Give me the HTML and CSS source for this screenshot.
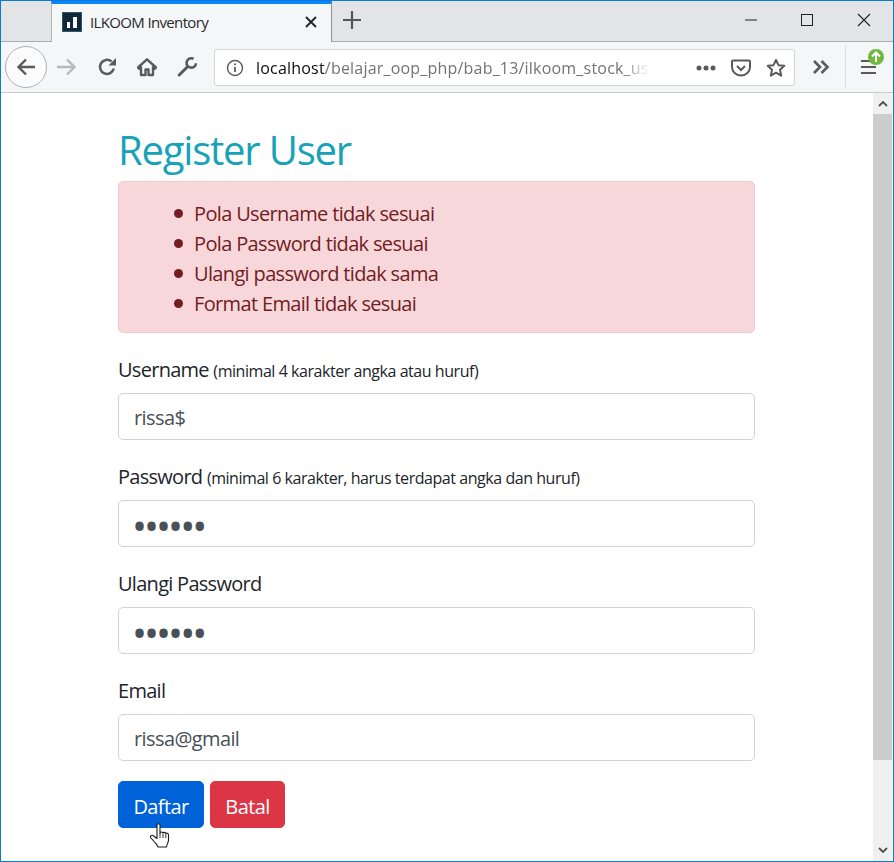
FILE: index.html
```html
<!DOCTYPE html>
<html lang="id">
<head>
<meta charset="utf-8">
<title>ILKOOM Inventory</title>
<link rel="stylesheet" href="styles.css">
</head>
<body>
<div class="window">
  <div class="tabbar">
    <div class="tab-spacer"></div>
    <div class="tab">
      <svg class="favicon" viewBox="0 0 20 20" width="20" height="20"><rect x="0.5" y="0.5" width="19" height="19" fill="#12263a" stroke="#2a5a6c"/><rect x="5" y="10" width="3" height="6" fill="#fff"/><rect x="11" y="5" width="4" height="11" fill="#fff"/></svg>
      <span class="tab-title">ILKOOM Inventory</span>
      <svg class="tab-close" viewBox="0 0 12 12" width="12" height="12"><path d="M1 1l10 10M11 1L1 11" stroke="#222" stroke-width="1.8" fill="none"/></svg>
    </div>
    <div class="newtab"><svg viewBox="0 0 18 18" width="18" height="18"><path d="M9 0v18M0 9h18" stroke="#555" stroke-width="2.200" fill="none"/></svg></div>
    <div class="winctl">
      <span class="winbtn"><svg viewBox="0 0 14 14" width="14" height="14"><path d="M1 7h12" stroke="#222" stroke-width="1" fill="none"/></svg></span>
      <span class="winbtn"><svg viewBox="0 0 14 14" width="14" height="14"><rect x="1.5" y="1.5" width="11" height="11" stroke="#222" fill="none"/></svg></span>
      <span class="winbtn"><svg viewBox="0 0 14 14" width="14" height="14"><path d="M1 1l12 12M13 1L1 13" stroke="#222" stroke-width="1.1" fill="none"/></svg></span>
    </div>
  </div>
  <div class="toolbar">
    <div class="tool back"><svg viewBox="0 0 20 20" width="20" height="20"><path d="M10 2.500L2.500 10l7.500 7.500M3 10h16" stroke="#5a5a5c" stroke-width="2.400" fill="none"/></svg></div>
    <div class="tool"><svg viewBox="0 0 20 20" width="20" height="20"><path d="M10 2.500L17.500 10 10 17.500M17 10H0" stroke="#b8b8b9" stroke-width="2.400" fill="none"/></svg></div>
    <div class="tool"><svg viewBox="0 0 20 20" width="20" height="20"><path d="M16.800 11.500A7 7 0 1 1 14.500 4.500" stroke="#5a5a5c" stroke-width="2.500" fill="none"/><path d="M19 1v7.500h-7.500z" fill="#5a5a5c"/></svg></div>
    <div class="tool"><svg viewBox="0 0 20 20" width="20" height="20"><path d="M10 2.300L1 10.500l1.300 1.300L4 10.300V18h4.500v-5.500h3V18H16v-7.700l1.700 1.500 1.300-1.300z" fill="none" stroke="#5a5a5c" stroke-width="2.400" stroke-linejoin="round"/></svg></div>
    <div class="tool"><svg viewBox="0 0 20 20" width="20" height="20"><path d="M2.200 18l8.300-8.300" stroke="#5a5a5c" stroke-width="3" stroke-linecap="round" fill="none"/><path d="M16.500 1.800A4.700 4.700 0 1 0 19 6.200" stroke="#5a5a5c" stroke-width="2.600" fill="none"/></svg></div>
    <div class="urlbar">
      <svg class="info" viewBox="0 0 18 18" width="18" height="18"><circle cx="9" cy="9" r="7.500" stroke="#5a5a5c" stroke-width="1.400" fill="none"/><path d="M9 8v5M9 4.500v1.800" stroke="#5a5a5c" stroke-width="1.800" fill="none"/></svg>
      <div class="url"><span class="host">localhost</span>/belajar_oop_php/bab_13/ilkoom_stock_use</div>
      <svg class="dots" viewBox="0 0 20 6" width="20" height="6"><circle cx="3" cy="3" r="2.500" fill="#5a5a5c"/><circle cx="10" cy="3" r="2.500" fill="#5a5a5c"/><circle cx="17" cy="3" r="2.500" fill="#5a5a5c"/></svg>
      <svg class="pocket" viewBox="0 0 20 18" width="20" height="18"><path d="M2 1.500h16a1 1 0 0 1 1 1V8a9 8.500 0 0 1-18 0V2.500a1 1 0 0 1 1-1z" stroke="#5a5a5c" stroke-width="2" fill="none"/><path d="M6 7l4 4 4-4" stroke="#5a5a5c" stroke-width="2" fill="none"/></svg>
      <svg class="star" viewBox="0 0 20 20" width="20" height="20"><path d="M10 1.800l2.500 5.400 5.800.6-4.300 4 1.200 5.900L10 14.700l-5.200 3 1.200-5.900-4.300-4 5.800-.6z" stroke="#5a5a5c" stroke-width="2" stroke-linejoin="round" fill="none"/></svg>
    </div>
    <div class="tool overflow"><svg viewBox="0 0 18 14" width="18" height="14"><path d="M2 1l6 6-6 6M9.500 1l6 6-6 6" stroke="#5a5a5c" stroke-width="2.600" fill="none"/></svg></div>
    <div class="sep"></div>
    <div class="tool menu">
      <svg viewBox="0 0 16 16" width="16" height="16"><path d="M0 2h9M0 8h15M0 14h15" stroke="#5a5a5c" stroke-width="2" fill="none"/></svg>
      <svg class="badge" viewBox="0 0 16 16" width="16" height="16"><circle cx="8" cy="8" r="8" fill="#6fb93c"/><path d="M8 13V4M4 7.500L8 3.500l4 4" stroke="#fff" stroke-width="2" fill="none"/></svg>
    </div>
  </div>
  <div class="viewport">
    <main class="page">
      <h1 class="title">Register User</h1>
      <div class="alert">
        <ul class="errors">
          <li>Pola Username tidak sesuai</li>
          <li>Pola Password tidak sesuai</li>
          <li>Ulangi password tidak sama</li>
          <li>Format Email tidak sesuai</li>
        </ul>
      </div>
      <form class="form">
        <div class="group">
          <label class="label" for="username">Username <small class="hint">(minimal 4 karakter angka atau huruf)</small></label>
          <input class="input" id="username" type="text" value="rissa$">
        </div>
        <div class="group">
          <label class="label" for="password">Password <small class="hint">(minimal 6 karakter, harus terdapat angka dan huruf)</small></label>
          <input class="input secret" id="password" type="password" value="rissa1">
        </div>
        <div class="group">
          <label class="label" for="ulangi">Ulangi Password</label>
          <input class="input secret" id="ulangi" type="password" value="rissa2">
        </div>
        <div class="group">
          <label class="label" for="email">Email</label>
          <input class="input" id="email" type="text" value="rissa@gmail">
        </div>
        <div class="actions">
          <button class="btn primary" type="button">Daftar</button>
          <button class="btn danger" type="button">Batal</button>
          <svg class="cursor" viewBox="0 0 20 25" width="20" height="25"><path d="M7 2c0-1.600 3-1.600 3 0v8c.6-1.400 2.600-1.200 3 0 .6-1 2.500-.8 2.800.5.800-.8 2.700-.4 2.700 1.500v5c0 3-1.800 4-2 7H8c-.5-2-1.800-3-3.500-5L1 15c-1.300-1.800.5-3.600 2.300-2.300L7 15.500z" fill="#fff" stroke="#1c1c1c" stroke-width="1.100" stroke-linejoin="round"/><path d="M10 10v5M13 10.500v4.500M15.800 11v4" stroke="#1c1c1c" stroke-width=".9"/></svg>
        </div>
      </form>
    </main>
    <div class="scrollbar">
      <svg class="arrow" viewBox="0 0 10 6" width="10" height="6"><path d="M1 5l4-4 4 4" stroke="#505050" stroke-width="1.800" fill="none"/></svg>
      <div class="thumb"></div>
      <svg class="arrow" viewBox="0 0 10 6" width="10" height="6"><path d="M1 1l4 4 4-4" stroke="#505050" stroke-width="1.800" fill="none"/></svg>
    </div>
  </div>
</div>
</body>
</html>
```
FILE: styles.css
```css
* { box-sizing: border-box; }
html, body { margin: 0; padding: 0; height: 100%; overflow: hidden; background: #fff; }
body { font-family: "Open Sans", "Noto Sans", sans-serif; color: #212529; }
.window { width: 894px; height: 862px; border: 1px solid #0f7ad2; display: flex; flex-direction: column; }
.tabbar { height: 41px; flex: none; background: #e3e4e6; display: flex; border-bottom: 1px solid #a9abae; }
.tab-spacer { width: 50px; flex: none; }
.tab { width: 281px; height: 41px; flex: none; background: #f5f6f7; border-left: 1px solid #b4b5b7; border-right: 1px solid #8f9094; border-top: 3px solid #0a84ff; display: flex; align-items: center; padding: 0 14px 2px 10px; }
.favicon { flex: none; }
.tab-title { margin-left: 8px; font-size: 15px; letter-spacing: -0.65px; color: #2a2a2e; flex: 1; white-space: nowrap; }
.tab-close { flex: none; }
.newtab { width: 40px; flex: none; display: flex; align-items: center; justify-content: center; padding-bottom: 2px; }
.winctl { margin-left: auto; display: flex; padding-right: 1px; }
.winbtn { width: 56.500px; height: 40px; display: flex; align-items: center; justify-content: center; padding-bottom: 2px; }
.toolbar { height: 51px; flex: none; background: #f5f6f7; border-bottom: 1px solid #c9cacc; display: flex; align-items: center; padding: 0 0 0 6px; }
.tool { width: 40px; height: 40px; flex: none; display: flex; align-items: center; justify-content: center; position: relative; margin-top: -1px; }
.back { width: 42px; height: 42px; margin-left: -2px; background: #fbfbfc; border: 1px solid #b1b1b3; border-radius: 50%; }
.urlbar { width: 581px; height: 37px; margin-left: 7px; margin-top: 1px; flex: none; background: #fff; border: 1px solid #d4d5d7; border-radius: 3px; display: flex; align-items: center; padding: 0 9px 0 11px; }
.info { flex: none; margin-right: 12px; }
.url { width: 410px; flex: none; overflow: hidden; white-space: nowrap; font-size: 16px; letter-spacing: 0.2px; color: #737373; -webkit-mask-image: linear-gradient(90deg, #000 89%, transparent 96%); mask-image: linear-gradient(90deg, #000 89%, transparent 96%); }
.host { color: #0c0c0d; }
.dots { flex: none; margin-left: 30px; }
.pocket { flex: none; margin-left: 15px; }
.star { flex: none; margin-left: 15px; }
.overflow { margin-left: 6px; }
.sep { width: 1px; height: 42px; background: #dcdddf; margin-left: 4px; flex: none; }
.menu { margin-left: 3px; }
.badge { position: absolute; left: 19px; top: 2px; }
.viewport { flex: 1; display: flex; min-height: 0; }
.page { flex: 1; min-width: 0; padding: 30px 0 0 117px; overflow: hidden; }
.title { margin: 0 0 4px; width: 637px; font-size: 40px; line-height: 54px; font-weight: 400; color: #17a2b8; letter-spacing: -1.2px; }
.alert { width: 637px; height: 152px; background: #f8d7da; border: 1px solid #f5c6cb; border-radius: 5px; color: #721c24; padding: 17px 25px 13px; margin-bottom: 20px; font-size: 20px; line-height: 30px; }
.errors { margin: 0; padding: 0 0 0 50px; letter-spacing: -0.65px; list-style: none; }
.errors li::before { content: ""; display: inline-block; width: 9px; height: 9px; border-radius: 50%; background: currentColor; margin-left: -20px; margin-right: 11px; vertical-align: 3px; }
.form { width: 637px; }
.group { margin-bottom: 20px; }
.label { display: block; height: 30px; padding-top: 2px; font-size: 20px; line-height: 30px; margin-bottom: 10px; letter-spacing: -0.72px; white-space: nowrap; }
.hint { font-size: 16px; line-height: 1; letter-spacing: -0.45px; }
.input { display: block; width: 100%; height: 47px; border: 1px solid #ced4da; border-radius: 5px; padding: 2px 15px 0; font-family: inherit; font-size: 20px; letter-spacing: -0.6px; color: #495057; background: #fff; outline: none; }
.secret { font-size: 40px; letter-spacing: -3px; padding-top: 4px; padding-left: 13px; }
.actions { position: relative; display: flex; gap: 6px; }
.btn { height: 47px; border-radius: 5px; border: 1px solid; font-family: inherit; font-size: 20px; letter-spacing: -0.6px; color: #fff; padding: 3px 0 0; }
.primary { width: 86px; background: #0062d8; border-color: #0062d8; }
.danger { width: 75px; background: #dc3545; border-color: #dc3545; }
.cursor { position: absolute; left: 32px; top: 42px; }
.scrollbar { width: 19px; margin-right: 1px; flex: none; background: #f0f0f0; display: flex; flex-direction: column; align-items: center; }
.arrow { flex: none; margin: 8px 0; }
.thumb { width: 100%; flex: 1; background: #cdcdcd; margin-bottom: 79px; margin-top: -1px; }
```
